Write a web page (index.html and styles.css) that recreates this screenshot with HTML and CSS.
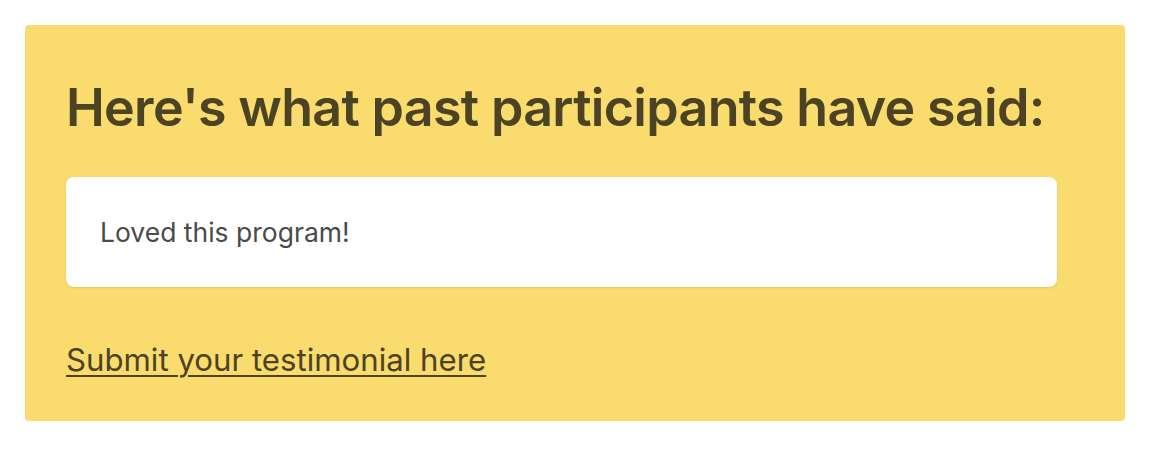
FILE: index.html
```html
<!DOCTYPE html>
<html>
<head>
<meta charset="utf-8">
<link rel="stylesheet" href="styles.css">
</head>
<body>
<section class="testimonials">
  <h2 class="title">Here's what past participants have said:</h2>
  <div class="card">
    <p class="quote">Loved this program!</p>
  </div>
  <a class="submit" href="#">Submit your testimonial here</a>
</section>
</body>
</html>
```

FILE: styles.css
```css
html, body {
  margin: 0;
  padding: 0;
  background: #ffffff;
}
body {
  padding: 25px 27px 31px 25px;
  font-family: Inter, "Noto Sans", sans-serif;
}
.testimonials {
  background: #fadc6e;
  border-radius: 4px;
  padding: 53px 41px 40px 41px;
  display: flex;
  flex-direction: column;
  align-items: flex-start;
  height: 396px;
  box-sizing: border-box;
}
.title {
  margin: 0;
  font-size: 52px;
  font-weight: 600;
  line-height: 60px;
  letter-spacing: -0.7px;
  color: #4b4323;
}
.card {
  margin-top: 39px;
  width: 991px;
  height: 110px;
  box-sizing: border-box;
  background: #ffffff;
  border-radius: 8px;
  box-shadow: 0 1px 2px rgba(160, 120, 0, 0.25);
  padding: 0 34px;
  display: flex;
  align-items: center;
}
.quote {
  margin: 0;
  font-size: 26.5px;
  color: #4a4a4a;
}
.submit {
  margin-top: 54px;
  font-size: 31.2px;
  color: #4b4323;
  text-decoration: underline;
  text-underline-offset: 4px;
  text-decoration-thickness: 2px;
}
```
